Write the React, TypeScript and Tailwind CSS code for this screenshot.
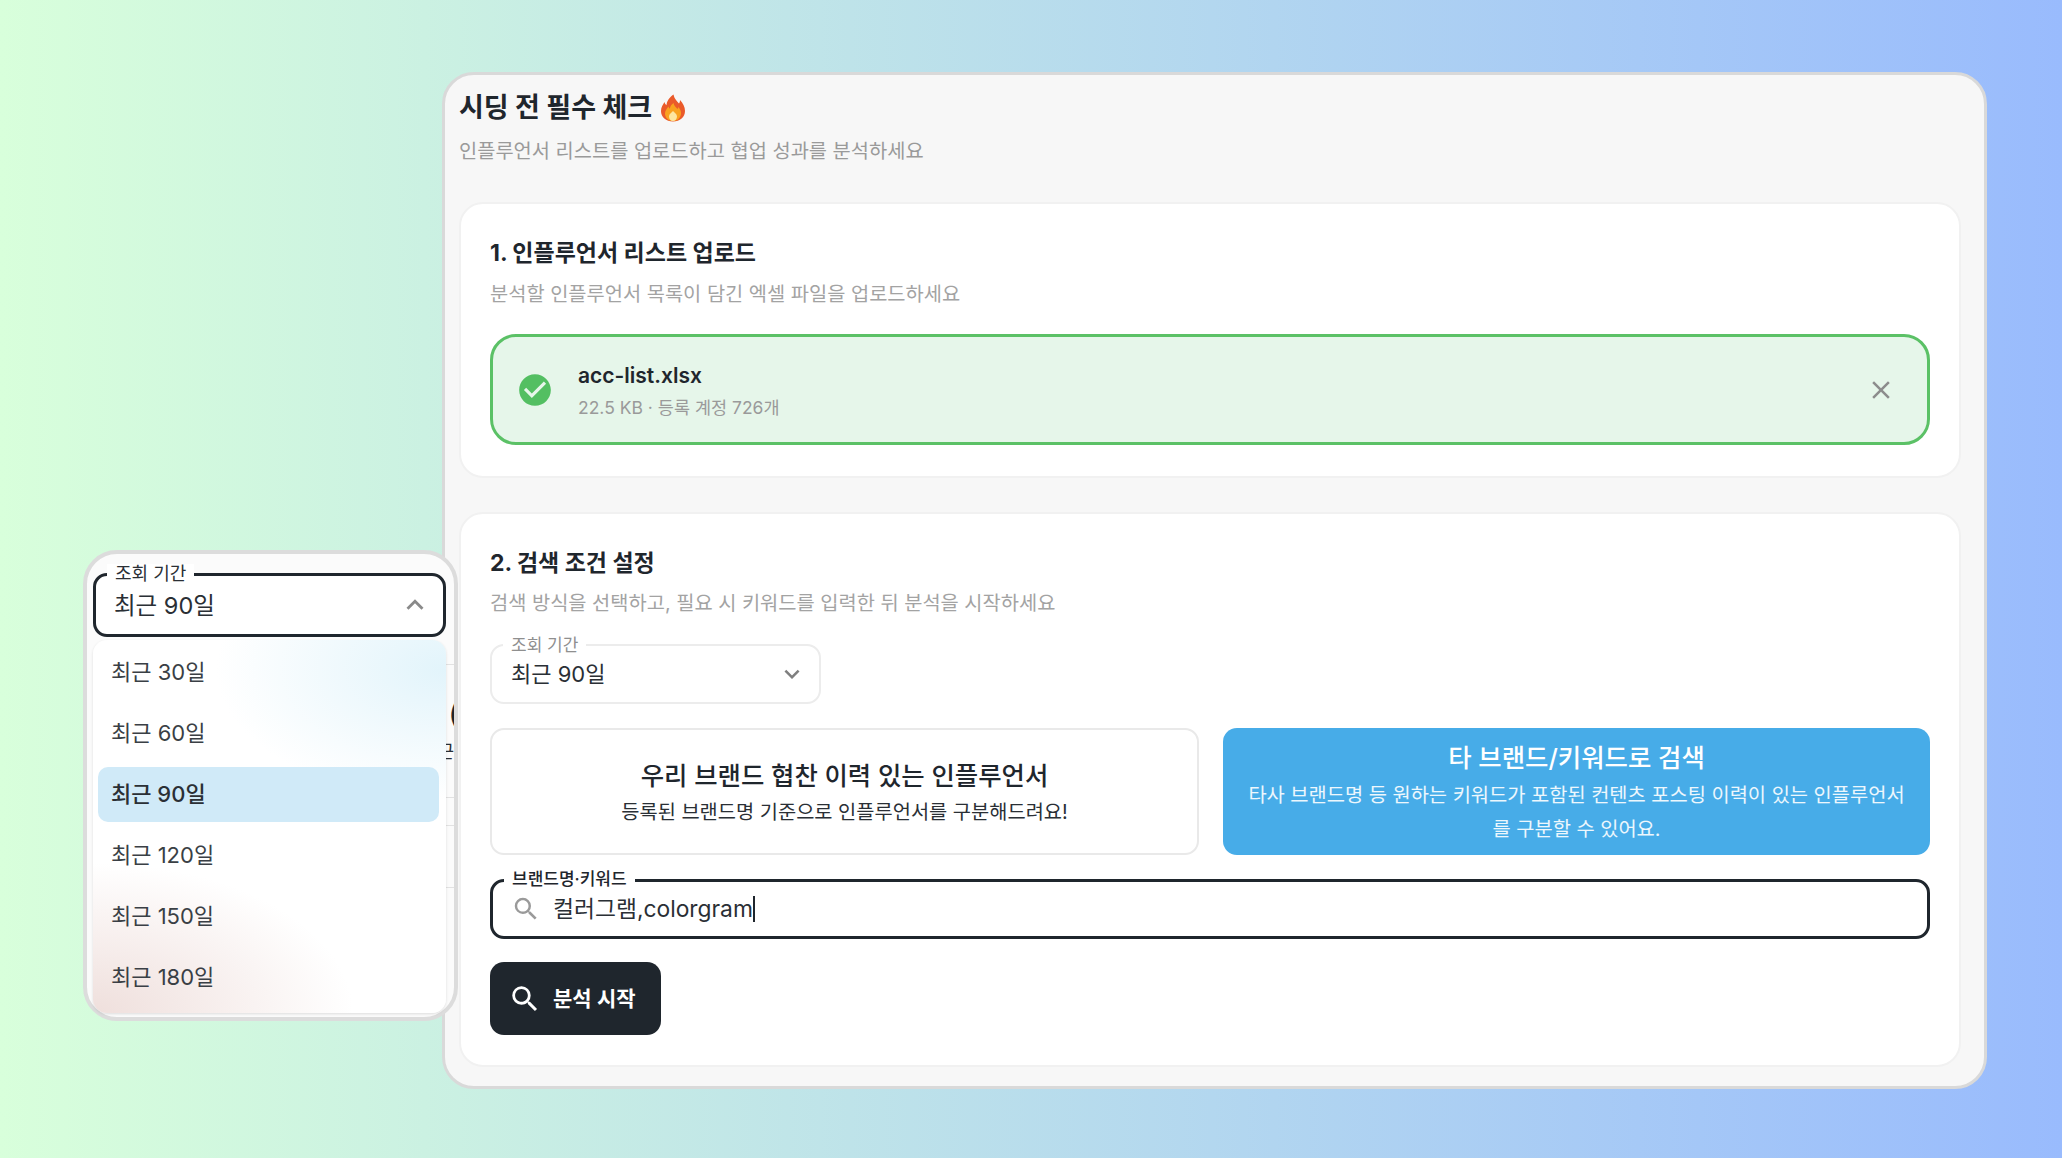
import type React from "react";
import {
	MdCheckCircle,
	MdClose,
	MdKeyboardArrowDown,
	MdKeyboardArrowUp,
	MdSearch,
} from "react-icons/md";

const FONT = "font-['Inter','Noto_Sans_CJK_KR',sans-serif]";

const periods = ["최근 30일", "최근 60일", "최근 90일", "최근 120일", "최근 150일", "최근 180일"];

const FloatingLabel: React.FC<{ text: string; className?: string }> = ({ text, className }) => (
	<span className={`absolute left-[11px] bg-white px-[8px] leading-[20px] ${className ?? ""}`}>
		{text}
	</span>
);

// flame emoji, no colour emoji font available
const Flame = () => (
	<svg className="ml-[8px] h-[28px] w-[26px]" fill="none" viewBox="0 0 26 28">
		<path
			d="M13.5 0.5c1 4.500 3 6 5.500 9 .8-1 1-2.200 1-3.500 3 3 5 7 5 11 0 6-5 10.500-12 10.500S1 23 1 17c0-4 2-6.500 3.500-9 .3 1.500 1 2.500 2 3.200C6.800 7 9.500 3 13.500.5z"
			fill="#ea5a2a"
		/>
		<path
			d="M13.500 9c.6 3 2.500 4 4 6 .5-.5.800-1.200.900-2 1.600 2 2.600 4 2.600 6 0 4.500-3.400 8-8 8s-8-3.500-8-7.500c0-3 2-5 3.500-7 .2 1 .6 1.800 1.300 2.300C10 12.500 11.500 10.500 13.500 9z"
			fill="#f9a11f"
		/>
		<path
			d="M13 17c1.500 1.500 4 3 4 5.500 0 2.500-1.800 4.500-4 4.500s-4-2-4-4.500c0-2.500 2.500-4 4-5.500z"
			fill="#fde6a0"
		/>
	</svg>
);

const UploadCard = () => (
	<section className="h-[276px] w-[1502px] rounded-[24px] border-2 border-[#f1f1f1] bg-white px-[29px] pt-[33px]">
		<h2 className="text-[23px] font-bold leading-[32px] text-[#1f262d]">
			1. 인플루언서 리스트 업로드
		</h2>
		<p className="mt-[10px] text-[19.8px] leading-[30px] text-[#a3a3a3]">
			분석할 인플루언서 목록이 담긴 엑셀 파일을 업로드하세요
		</p>
		<div className="mt-[25px] flex h-[111px] w-[1440px] items-center rounded-[26px] border-[3px] border-[#5bc166] bg-[#e6f6ea] pr-[31px] pl-[23px]">
			<MdCheckCircle className="text-[#53bf62]" size={38} />
			<div className="ml-[24px] flex-1 pt-[2px]">
				<div className="text-[21px] font-semibold leading-[30px] text-[#1f262d]">acc-list.xlsx</div>
				<div className="mt-[4px] text-[17.5px] leading-[26px] text-[#9a9a9a]">
					22.5 KB · 등록 계정 726개
				</div>
			</div>
			<MdClose className="text-[#8c8c8c]" size={30} />
		</div>
	</section>
);

const SearchCard = () => (
	<section className="mt-[34px] h-[555px] w-[1502px] rounded-[24px] border-2 border-[#f1f1f1] bg-white px-[29px] pt-[33px]">
		<h2 className="text-[23px] font-bold leading-[32px] text-[#1f262d]">2. 검색 조건 설정</h2>
		<p className="mt-[9px] text-[19.8px] leading-[30px] text-[#a3a3a3]">
			검색 방식을 선택하고, 필요 시 키워드를 입력한 뒤 분석을 시작하세요
		</p>
		<div className="relative mt-[26px] flex h-[60px] w-[331px] items-center justify-between rounded-[14px] border-2 border-[#ececec] pr-[12px] pl-[19px]">
			<FloatingLabel className="top-[-11px] text-[17px] text-[#8f8f8f]" text="조회 기간" />
			<span className="text-[22px] text-[#2a2f35]">최근 90일</span>
			<MdKeyboardArrowDown className="text-[#7f7f7f]" size={30} />
		</div>
		<div className="mt-[24px] flex h-[127px] w-[1440px] gap-[24px]">
			<div className="flex w-[709px] flex-col items-center justify-center rounded-[14px] border-2 border-[#e9e9e9] pt-[3px]">
				<div className="text-[25.4px] font-medium leading-[36px] text-[#1f262d]">
					우리 브랜드 협찬 이력 있는 인플루언서
				</div>
				<div className="mt-[1px] text-[19.8px] leading-[34px] text-[#2a2f35]">
					등록된 브랜드명 기준으로 인플루언서를 구분해드려요!
				</div>
			</div>
			<div className="flex flex-1 flex-col items-center justify-center rounded-[14px] bg-[#47ace8] px-[20px] pt-[2px] text-center text-white">
				<div className="text-[25.4px] font-medium leading-[36px]">타 브랜드/키워드로 검색</div>
				<div className="mt-[2px] text-[19.8px] leading-[34px] text-white/90">
					타사 브랜드명 등 원하는 키워드가 포함된 컨텐츠 포스팅 이력이 있는 인플루언서를 구분할 수 있어요.
				</div>
			</div>
		</div>
		<div className="relative mt-[24px] flex h-[60px] w-[1440px] items-center rounded-[14px] border-[3px] border-[#1f262d] pl-[18px]">
			<FloatingLabel className="top-[-13px] text-[17px] font-medium text-[#1f262d]" text="브랜드명·키워드" />
			<MdSearch className="text-[#9a9a9a]" size={30} />
			<span className="ml-[12px] text-[22.8px] text-[#2a2f35]">컬러그램,colorgram</span>
			<span className="h-[26px] w-[2px] bg-[#1f262d]" />
		</div>
		<button className="mt-[23px] flex h-[73px] w-[171px] items-center gap-[11px] rounded-[14px] bg-[#1f262d] pl-[18px] text-[21px] font-semibold text-white">
			<MdSearch size={34} />
			분석 시작
		</button>
	</section>
);

const PeriodPopup = () => (
	<div className="absolute top-[550px] left-[83px] h-[471px] w-[375px] rounded-[34px] border-4 border-[#dcdcdc] bg-[#fbfbfb] pt-[19px] pr-[8px] pl-[6px]">
		{/* table behind the glass panel, peeking out at the right edge */}
		<div className="absolute top-[110px] right-0 h-[1px] w-[9px] bg-[#e2e2e2]" />
		<div className="absolute top-[243px] right-0 h-[1px] w-[9px] bg-[#e2e2e2]" />
		<div className="absolute top-[271px] right-0 h-[1px] w-[9px] bg-[#e2e2e2]" />
		<div className="absolute top-[333px] right-0 h-[1px] w-[9px] bg-[#e2e2e2]" />
		<div className="absolute top-[142px] right-0 h-[36px] w-[5px] overflow-hidden text-[26px] font-semibold leading-[36px] text-[#1f262d]">
			(
		</div>
		<div className="absolute top-[186px] right-0 flex h-[24px] w-[9px] justify-end overflow-hidden text-[18px] leading-[24px] text-[#2a2f35]">
			<span className="shrink-0">근</span>
		</div>
		<div className="relative flex h-[64px] items-center justify-between rounded-[14px] border-[3px] border-[#1f262d] bg-white pr-[11px] pl-[18px]">
			<FloatingLabel className="top-[-12px] text-[18px] text-[#2a2f35]" text="조회 기간" />
			<span className="pt-[2px] text-[23.5px] text-[#2a2f35]">최근 90일</span>
			<MdKeyboardArrowUp className="text-[#8a8a8a]" size={34} />
		</div>
		<ul className="relative mt-[3px] flex flex-col rounded-[14px] bg-[radial-gradient(ellipse_230px_130px_at_100%_8%,#e2f4fb,transparent),radial-gradient(ellipse_260px_150px_at_0%_100%,#efdfdc,transparent),linear-gradient(#ffffff,#ffffff)] pt-[2px] pr-[7px] pb-[5px] pl-[5px] shadow-[0_1px_3px_rgba(0,0,0,0.12)]">
			{periods.map((label) => (
				<li
					className={
						label === "최근 90일"
							? "my-[3px] flex h-[55px] items-center rounded-[10px] bg-[#d0eaf8] px-[13px] text-[22px] font-medium text-[#2a2f35]"
							: "flex h-[61px] items-center px-[13px] text-[22px] text-[#3a3f45]"
					}
					key={label}
				>
					{label}
				</li>
			))}
		</ul>
	</div>
);

export default function App() {
	return (
		<div
			className={`${FONT} relative h-[1158px] w-[2062px] overflow-hidden bg-[linear-gradient(90deg,#d8ffdb,#99bbfd)] pt-[72px] pl-[442px]`}
		>
			<main className="h-[1017px] w-[1545px] rounded-[32px] border-[3px] border-[#d9d9d9] bg-[#f7f7f7] pl-[14px]">
				<div className="flex items-center pt-[15px]">
					<h1 className="text-[27px] font-bold leading-[36px] text-[#1f262d]">시딩 전 필수 체크</h1>
					<Flame />
				</div>
				<p className="mt-[10px] text-[19.8px] leading-[30px] text-[#9a9a9a]">
					인플루언서 리스트를 업로드하고 협업 성과를 분석하세요
				</p>
				<div className="mt-[36px]">
					<UploadCard />
					<SearchCard />
				</div>
			</main>
			<PeriodPopup />
		</div>
	);
}
